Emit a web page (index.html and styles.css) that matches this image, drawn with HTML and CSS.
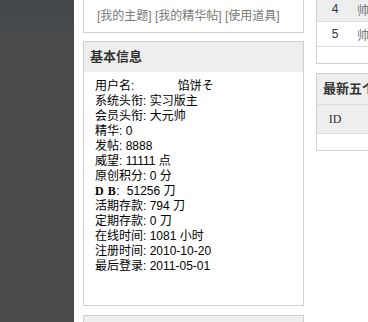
FILE: index.html
```html
<!DOCTYPE html>
<html lang="zh-CN">
<head>
<meta charset="utf-8">
<title>个人资料</title>
<link rel="stylesheet" href="styles.css">
</head>
<body>
<aside class="sidebar"></aside>
<main class="main">
  <div class="col-left">
    <div class="box links-box">
      <a class="link">[我的主题]</a> <a class="link">[我的精华帖]</a> <a class="link">[使用道具]</a>
    </div>
    <div class="box">
      <div class="box-head">基本信息</div>
      <ul class="info-list">
        <li>用户名: <span class="uname">馅饼そ</span></li>
        <li>系统头衔: 实习版主</li>
        <li>会员头衔: 大元帅</li>
        <li>精华: 0</li>
        <li>发帖: 8888</li>
        <li>威望: 11111 点</li>
        <li>原创积分: 0 分</li>
        <li><b class="db">D B</b>: <span class="db-val">51256 刀</span></li>
        <li>活期存款: 794 刀</li>
        <li>定期存款: 0 刀</li>
        <li>在线时间: 1081 小时</li>
        <li>注册时间: 2010-10-20</li>
        <li>最后登录: 2011-05-01</li>
      </ul>
    </div>
    <div class="box">
      <div class="box-head">&nbsp;</div>
    </div>
  </div>
  <div class="col-right">
    <div class="box table-box">
      <table class="grid">
        <tr class="alt"><td class="num">4</td><td class="link">帅哥来了</td></tr>
        <tr><td class="num">5</td><td class="link">帅气的人</td></tr>
      </table>
    </div>
    <div class="box table-box">
      <div class="box-head">最新五个主题</div>
      <table class="grid">
        <tr class="alt head-row"><td class="num id">ID</td><td class="title-col">标题</td></tr>
      </table>
    </div>
  </div>
</main>
</body>
</html>
```
FILE: styles.css
```css
html, body {
  margin: 0;
  padding: 0;
  height: 100%;
  overflow: hidden;
  background: #fff;
}
body {
  display: flex;
  font-family: "Liberation Sans", "Noto Sans CJK SC", sans-serif;
  font-size: 12px;
  color: #000;
}
.sidebar {
  flex: 0 0 74px;
  height: 100%;
  background: linear-gradient(#43484c 0, #494a4b 45px, #4a4a4a 100%);
}
.main {
  flex: 1;
  display: flex;
  gap: 12px;
  padding-left: 9px;
  overflow: hidden;
}
.col-left {
  flex: 0 0 221px;
  display: flex;
  flex-direction: column;
  gap: 8px;
  margin-top: -1px;
}
.col-right {
  flex: 0 0 200px;
  display: flex;
  flex-direction: column;
  gap: 9px;
  margin-top: -4px;
}
.box {
  border: 1px solid #cfcfcf;
  background: #fff;
}
.links-box {
  padding: 8px 13px;
  line-height: 16px;
  white-space: nowrap;
}
.link {
  color: #777;
  text-decoration: none;
}
.box-head {
  height: 30px;
  line-height: 30px;
  padding: 0 6px;
  background: #eeeeee;
  font-weight: bold;
  font-size: 13px;
  color: #333;
  white-space: nowrap;
}
.info-list {
  list-style: none;
  margin: 0;
  padding: 7px 11px 31px;
  line-height: 15px;
}
.col-left > .box + .box + .box { margin-top: 1px; }
.uname { margin-left: 40px; }
.db {
  font-family: "Liberation Serif", serif;
  font-size: 12px;
  letter-spacing: 0.5px;
}
.db-val { margin-left: 4px; }
.table-box { padding-bottom: 16px; }
.grid {
  border-collapse: collapse;
  width: 100%;
  white-space: nowrap;
}
.grid td {
  height: 24px;
  padding: 0;
  border-bottom: 1px solid #dddddd;
  color: #333;
}
.grid .alt { background: #eeeeee; }
.grid .num {
  width: 36px;
  text-align: center;
}
.grid .link { padding-left: 4px; color: #777; }
.head-row td {
  height: 28px;
  border-top: 1px solid #dddddd;
}
.grid .id {
  font-family: "Liberation Serif", serif;
  font-size: 12px;
}
.grid .title-col { text-align: center; }
```
